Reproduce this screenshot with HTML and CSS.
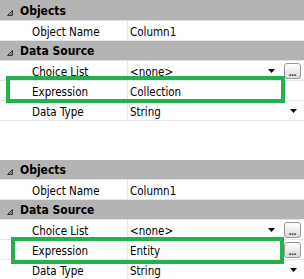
FILE: index.html
```html
<!DOCTYPE html>
<html lang="en">
<head>
    <meta charset="UTF-8">
    <meta name="viewport" content="width=device-width, initial-scale=1.0">
    <title>Property Grid</title>
    <link rel="stylesheet" href="styles.css">
</head>
<body>
    <div class="grid first">
        <div class="cat"><svg class="tri" width="6" height="6" viewBox="0 0 6 6"><polygon points="5.5,0.5 5.5,5.5 0.5,5.5" /></svg>Objects</div>
        <div class="row">
            <div class="label">Object Name</div>
            <div class="value"><span class="text">Column1</span></div>
        </div>
        <div class="cat"><svg class="tri" width="6" height="6" viewBox="0 0 6 6"><polygon points="5.5,0.5 5.5,5.5 0.5,5.5" /></svg>Data Source</div>
        <div class="row">
            <div class="label">Choice List</div>
            <div class="value"><span class="text">&lt;none&gt;</span><svg class="arrow" width="7" height="4" viewBox="0 0 7 4"><polygon points="0,0 7,0 3.5,4" /></svg></div>
            <button class="more">...</button>
        </div>
        <div class="row">
            <div class="label">Expression</div>
            <div class="value"><span class="text">Collection</span></div>
        </div>
        <div class="row">
            <div class="label">Data Type</div>
            <div class="value"><span class="text">String</span><svg class="arrow" width="7" height="4" viewBox="0 0 7 4"><polygon points="0,0 7,0 3.5,4" /></svg></div>
        </div>
        <div class="mark"></div>
    </div>

    <div class="grid second">
        <div class="cat"><svg class="tri" width="6" height="6" viewBox="0 0 6 6"><polygon points="5.5,0.5 5.5,5.5 0.5,5.5" /></svg>Objects</div>
        <div class="row">
            <div class="label">Object Name</div>
            <div class="value"><span class="text">Column1</span></div>
        </div>
        <div class="cat"><svg class="tri" width="6" height="6" viewBox="0 0 6 6"><polygon points="5.5,0.5 5.5,5.5 0.5,5.5" /></svg>Data Source</div>
        <div class="row">
            <div class="label">Choice List</div>
            <div class="value"><span class="text">&lt;none&gt;</span><svg class="arrow" width="7" height="4" viewBox="0 0 7 4"><polygon points="0,0 7,0 3.5,4" /></svg></div>
            <button class="more">...</button>
        </div>
        <div class="row">
            <div class="label">Expression</div>
            <div class="value"><span class="text">Entity</span></div>
            <button class="more">...</button>
        </div>
        <div class="row">
            <div class="label">Data Type</div>
            <div class="value"><span class="text">String</span><svg class="arrow" width="7" height="4" viewBox="0 0 7 4"><polygon points="0,0 7,0 3.5,4" /></svg></div>
        </div>
        <div class="mark"></div>
    </div>
</body>
</html>
```

FILE: styles.css
```css
body {
    margin: 0;
    background-color: white;
    font-family: "DejaVu Sans Condensed", "DejaVu Sans", sans-serif;
    font-stretch: condensed;
    font-size: 11.5px;
    color: #000;
    overflow: hidden;
}

.grid {
    position: relative;
    width: 304px;
}

.second {
    margin-top: 39px;
}

.cat {
    height: 20px;
    box-sizing: border-box;
    padding-top: 2px;
    line-height: 17px;
    background-color: #b4b4b4;
    border-bottom: 1px solid #e2e2e2;
    font-weight: bold;
    font-size: 12px;
    display: flex;
    align-items: center;
}

.first .cat:first-child {
    height: 21px;
    padding-top: 3px;
}

.tri {
    margin: 2px 7px 0 7px;
}

.tri polygon {
    fill: #8a8a8a;
    stroke: #3a3a3a;
    stroke-width: 1;
}

.row {
    height: 20px;
    box-sizing: border-box;
    border-bottom: 1px solid #e6e6e6;
    display: flex;
    align-items: stretch;
}

.row:last-of-type {
    border-bottom: none;
}

.label {
    width: 127px;
    flex: none;
    box-sizing: border-box;
    padding: 3px 0 0 32px;
    line-height: 17px;
    white-space: nowrap;
}

.value {
    flex: 1;
    display: flex;
    align-items: center;
    border-left: 1px solid #e6e6e6;
    padding-top: 3px;
    line-height: 17px;
}

.value .text {
    flex: 1;
    padding-left: 2px;
    white-space: nowrap;
}

.arrow {
    margin: -3px 7px 0 0;
}

.arrow polygon {
    fill: #000;
}

.more {
    flex: none;
    width: 17px;
    height: 16px;
    margin: 2px 3px 0 2px;
    padding: 0;
    border: 1px solid #979797;
    border-radius: 3px;
    background: linear-gradient(#fefefe, #dadada);
    font-family: "DejaVu Sans", sans-serif;
    font-size: 9px;
    font-weight: bold;
    line-height: 18px;
    color: #5a3a5a;
    letter-spacing: -1px;
    text-indent: -1px;
}

.mark {
    position: absolute;
    border: 4px solid #22b14c;
    box-sizing: border-box;
}

.first .mark {
    left: 6px;
    top: 76px;
    width: 279px;
    height: 27px;
}

.second .mark {
    left: 11px;
    top: 77px;
    width: 273px;
    height: 27px;
}
```
